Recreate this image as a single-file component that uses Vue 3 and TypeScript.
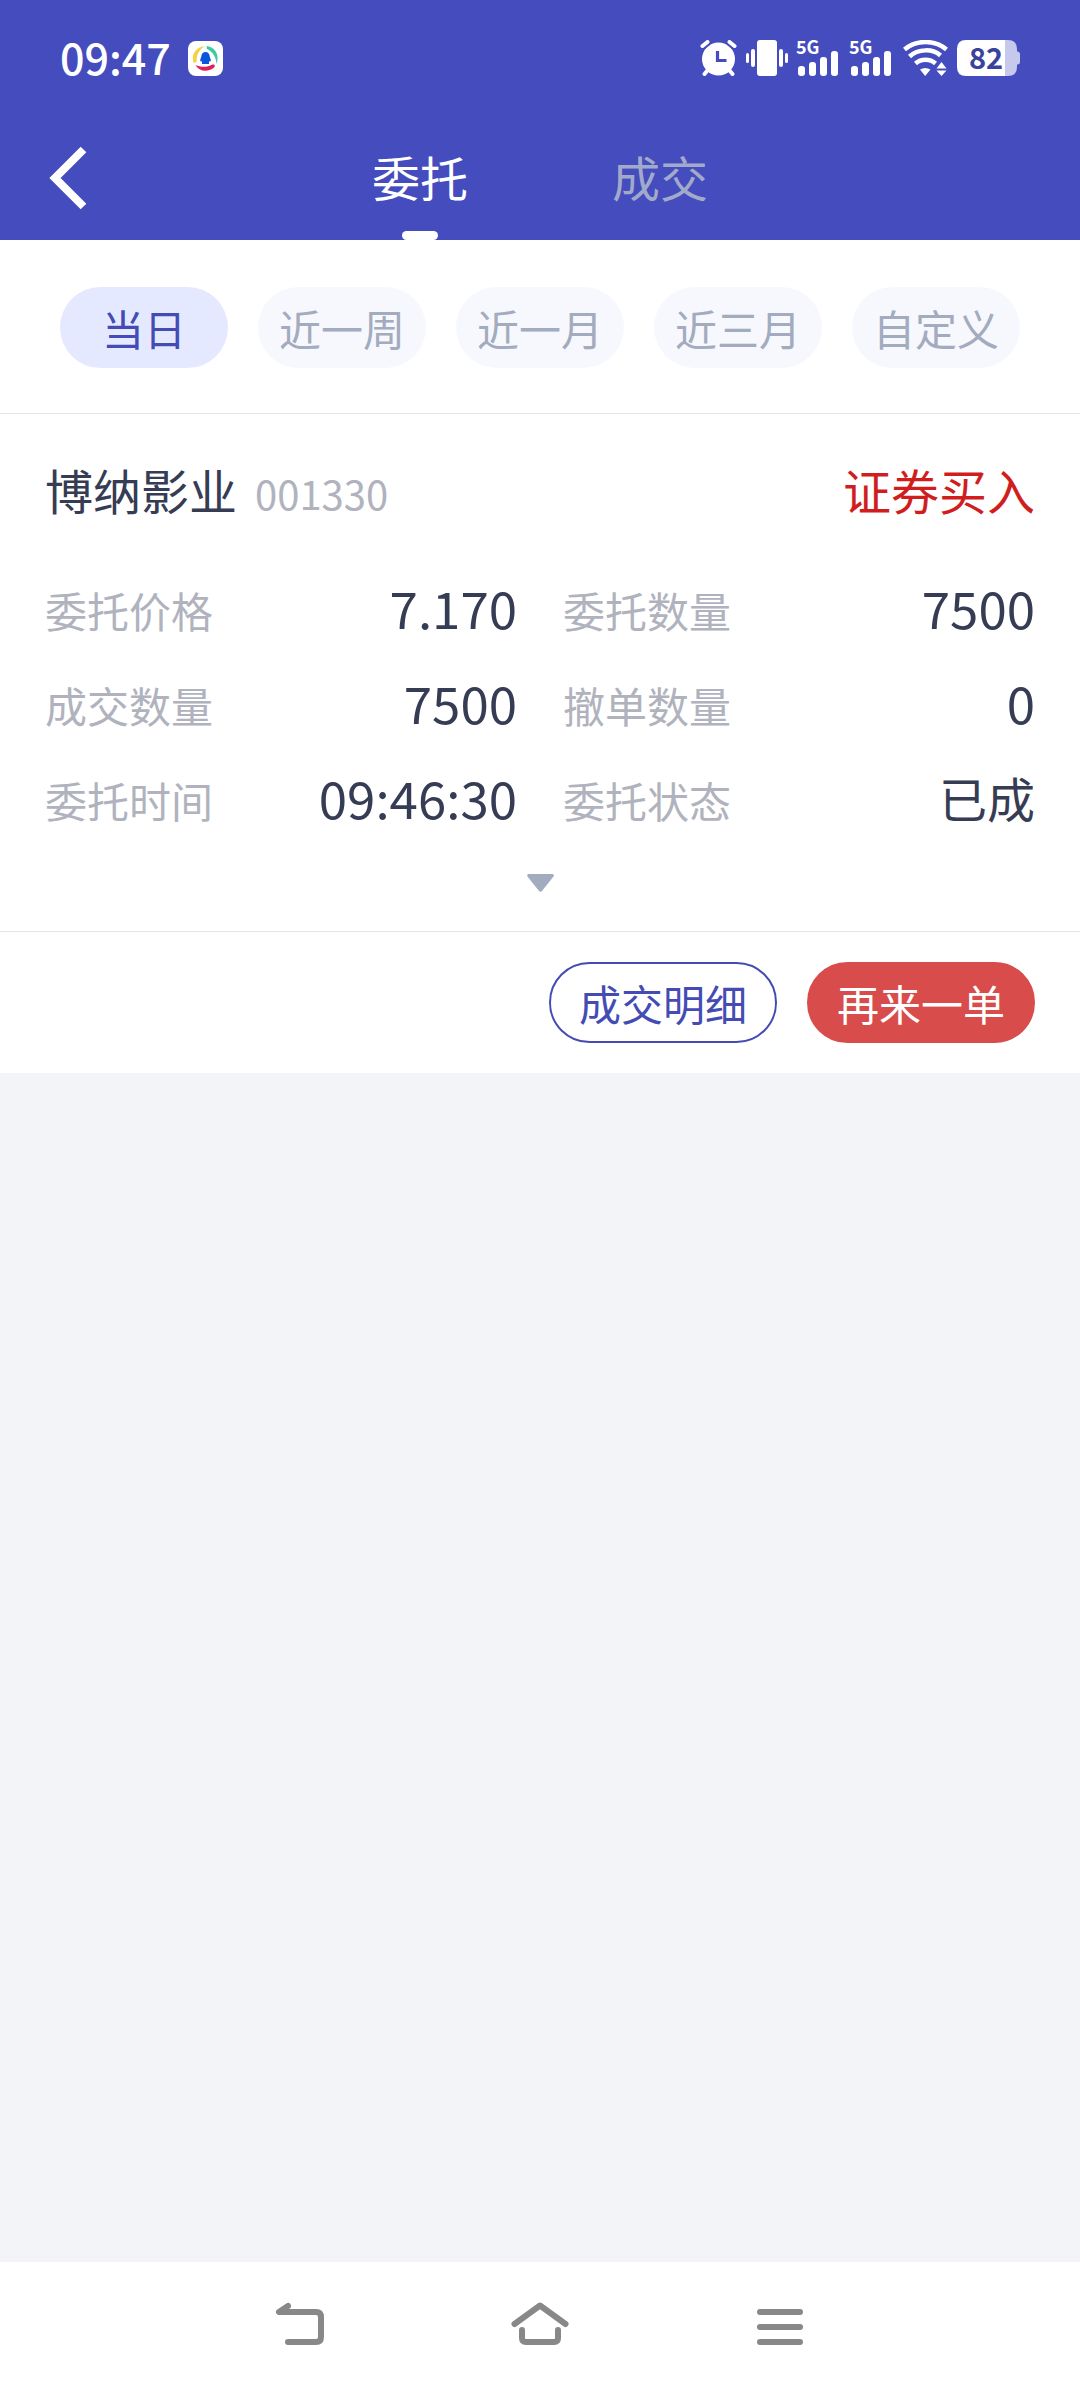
<script setup lang="ts">
import { ref } from 'vue'

interface Field {
  label: string
  value: string
  text?: boolean
}

const tabs: string[] = ['委托', '成交']
const activeTab = ref<string>('委托')

const ranges: string[] = ['当日', '近一周', '近一月', '近三月', '自定义']
const activeRange = ref<string>('当日')

const fields: Field[] = [
  { label: '委托价格', value: '7.170' },
  { label: '委托数量', value: '7500' },
  { label: '成交数量', value: '7500' },
  { label: '撤单数量', value: '0' },
  { label: '委托时间', value: '09:46:30' },
  { label: '委托状态', value: '已成', text: true },
]
</script>

<template>
  <div class="app">
    <header class="top">
      <div class="status">
        <div class="status-left">
          <span class="clock">09:47</span>
          <svg class="app-badge" width="35" height="35" viewBox="0 0 35 35" aria-hidden="true">
            <rect width="35" height="35" rx="8" fill="#fff" />
            <path d="M5.500 22C3 13 8 6 17 5C11 9 8.500 13 8.500 21Z" fill="#f5d040" />
            <path d="M19 5C27 6 32 14 28.500 23C28 16 25 11 18.500 7.500Z" fill="#3ccba6" />
            <path d="M7.500 24C13 26.500 19 26.500 24.500 23.500C27 23 27.500 25.500 25.500 27C19 31.500 11 30.500 7.500 24Z" fill="#dc1f5b" />
            <path d="M17.500 11C20 11 21.500 12.500 21.700 15.500L23 19.500L22 20.500L21 20.200V23H14V20.200L13 20.500L12 19.500L13.300 15.500C13.500 12.500 15 11 17.500 11Z" fill="#0b55dd" />
          </svg>
        </div>
        <div class="status-right">
          <svg width="37" height="36" viewBox="0 0 37 36" aria-hidden="true">
            <circle cx="18.500" cy="19" r="16.500" fill="#fff" />
            <path d="M2.500 6L7.500 2M34.500 6L29.500 2" stroke="#444cbe" stroke-width="8" />
            <path d="M2.500 6L7.500 2M34.500 6L29.500 2" stroke="#fff" stroke-width="4" stroke-linecap="round" />
            <path d="M7 31L4.500 34M30 31L32.500 34" stroke="#fff" stroke-width="4" stroke-linecap="round" />
            <path d="M17.500 11V20.500H26.500" fill="none" stroke="#444cbe" stroke-width="3.200" />
          </svg>
          <svg width="42" height="36" viewBox="0 0 42 36" aria-hidden="true">
            <g fill="#fff">
              <rect x="11" width="20" height="36" rx="3" />
              <rect y="13" width="3" height="10" rx="1.500" />
              <rect x="5" y="9" width="4" height="18" rx="2" />
              <rect x="33" y="9" width="4" height="18" rx="2" />
              <rect x="39" y="13" width="3" height="10" rx="1.500" />
            </g>
          </svg>
          <span v-for="n in 2" :key="n" class="signal">
            <span class="signal-tag">5G</span>
            <svg width="40" height="25" viewBox="0 0 40 25" aria-hidden="true">
              <g fill="#fff">
                <rect y="15" width="7" height="10" rx="3" />
                <rect x="11" y="11" width="7" height="14" rx="3" />
                <rect x="22" y="6" width="7" height="19" rx="3" />
                <rect x="33" width="7" height="25" rx="3" />
              </g>
            </svg>
          </span>
          <svg width="45" height="36" viewBox="0 0 45 36" aria-hidden="true">
            <g fill="none" stroke="#fff" stroke-width="4.500">
              <path d="M1.500 9.500C13 -0.500 32 -0.500 43.500 9.500" />
              <path d="M6.500 16.500C15 8.500 30 8.500 37.500 15.500" />
              <path d="M12.500 23.500C18 18.500 27 18.500 32.500 23.500" />
            </g>
            <path d="M17 29.500Q22 26.500 27.500 29.500L22.200 36Z" fill="#fff" />
            <path d="M33.500 28.500L38.500 22L43.500 28.500ZM33.500 30.500H43.500L38.500 36Z" fill="#fff" />
          </svg>
          <span class="battery">
            <svg width="63" height="36" viewBox="0 0 63 36" aria-hidden="true">
              <path d="M48 0H51Q60 0 60 9V11.500H61Q63 12 63 14V22Q63 24 61 24.500H60V27Q60 36 51 36H48Z" fill="#c7c9ec" />
              <path d="M9 0H48V36H9Q0 36 0 27V9Q0 0 9 0Z" fill="#fff" />
            </svg>
            <span class="battery-level">82</span>
          </span>
        </div>
      </div>

      <nav class="bar">
        <button class="back" type="button" aria-label="返回">
          <svg width="40" height="64" viewBox="0 0 40 64" aria-hidden="true">
            <path d="M35.500 3.500L7 32L35.500 60.500" fill="none" stroke="#fff" stroke-width="8" />
          </svg>
        </button>
        <div class="tabs">
          <button
            v-for="tab in tabs"
            :key="tab"
            type="button"
            class="tab"
            :class="{ active: tab === activeTab }"
            @click="activeTab = tab"
          >
            {{ tab }}
          </button>
        </div>
      </nav>
    </header>

    <section class="ranges">
      <button
        v-for="range in ranges"
        :key="range"
        type="button"
        class="range"
        :class="{ active: range === activeRange }"
        @click="activeRange = range"
      >
        {{ range }}
      </button>
    </section>

    <main class="content">
      <article class="order">
        <div class="order-body">
          <div class="order-head">
            <h2 class="name">博纳影业</h2>
            <span class="code">001330</span>
            <span class="side">证券买入</span>
          </div>
          <dl class="fields">
            <div v-for="field in fields" :key="field.label" class="field">
              <dt>{{ field.label }}</dt>
              <dd :class="{ text: field.text }">{{ field.value }}</dd>
            </div>
          </dl>
          <button class="expand" type="button" aria-label="展开">
            <svg width="27" height="18" viewBox="0 0 27 18" aria-hidden="true">
              <path d="M1.500 0H25.500Q27.500 0.500 26.500 2.500L15 17Q13.500 18.500 12 17L0.500 2.500Q-0.500 0.500 1.500 0Z" fill="#a3abbe" />
            </svg>
          </button>
        </div>
        <div class="actions">
          <button class="action outline" type="button">成交明细</button>
          <button class="action solid" type="button">再来一单</button>
        </div>
      </article>
    </main>

    <footer class="system-nav">
      <button type="button" aria-label="返回">
        <svg width="60" height="44" viewBox="0 0 60 44" aria-hidden="true">
          <path d="M18 4L9 10H46Q51 10 51 15V35Q51 40 46 40H18" />
        </svg>
      </button>
      <button type="button" aria-label="主页">
        <svg width="60" height="44" viewBox="0 0 60 44" aria-hidden="true">
          <path d="M4.500 22L30 3.500L55.500 22M12 28V36Q12 40 16 40H44Q48 40 48 36V28" />
        </svg>
      </button>
      <button type="button" aria-label="最近任务">
        <svg width="60" height="44" viewBox="0 0 60 44" aria-hidden="true">
          <path d="M10 10H50M10 25H50M10 40H50" />
        </svg>
      </button>
    </footer>
  </div>
</template>

<style>
body {
  margin: 0;
  background: #f3f4f7;
}
</style>

<style scoped>
.app {
  display: flex;
  flex-direction: column;
  min-height: 100vh;
  font-family: "Noto Sans CJK SC", "Noto Sans", sans-serif;
  color: #363c54;
  background: #f3f4f7;
}

button {
  padding: 0;
  border: 0;
  background: none;
  font: inherit;
  color: inherit;
  cursor: pointer;
}

svg {
  display: block;
}

.top {
  background: #444cbe;
  color: #fff;
}

.status {
  display: flex;
  align-items: center;
  justify-content: space-between;
  height: 116px;
  padding: 0 60px;
}

.status-left {
  display: flex;
  align-items: center;
  gap: 17px;
}

.clock {
  padding-bottom: 4px;
  font-size: 43px;
  line-height: 48px;
  font-weight: 500;
}

.status-right {
  display: flex;
  align-items: center;
  gap: 9px;
}

.signal {
  position: relative;
  display: flex;
  align-items: flex-end;
  width: 44px;
  height: 36px;
  padding-left: 1px;
  box-sizing: border-box;
}

.signal-tag {
  position: absolute;
  left: -1px;
  top: -3px;
  font-size: 18px;
  line-height: 18px;
  font-weight: 700;
}

.battery {
  position: relative;
}

.battery-level {
  position: absolute;
  left: 12px;
  top: 0;
  font-size: 29px;
  line-height: 33px;
  font-weight: 700;
  color: #3a429c;
}

.bar {
  display: grid;
  grid-template-columns: 1fr 480px 1fr;
  height: 124px;
}

.back {
  display: flex;
  align-items: center;
  padding-left: 48px;
}

.tabs {
  display: grid;
  grid-template-columns: 1fr 1fr;
}

.tab {
  position: relative;
  padding-bottom: 4px;
  font-size: 48px;
  line-height: 58px;
  color: #a2aacb;
}

.tab.active {
  color: #fff;
}

.tab.active::after {
  content: "";
  position: absolute;
  left: 50%;
  bottom: 0;
  width: 36px;
  height: 9px;
  margin-left: -18px;
  border-radius: 5px;
  background: #fff;
}

.ranges {
  display: flex;
  justify-content: space-between;
  padding: 47px 60px 45px;
  border-bottom: 1px solid #e4e5e7;
  background: #fff;
}

.range {
  width: 168px;
  height: 81px;
  border-radius: 41px;
  background: #f6f8fd;
  font-size: 42px;
  line-height: 81px;
  color: #a3abbe;
}

.range.active {
  background: #e5e9ff;
  color: #444cb4;
}

.content {
  flex: 1;
}

.order {
  background: #fff;
}

.order-body {
  padding: 46px 45px 0;
  border-bottom: 1px solid #e4e5e7;
}

.order-head {
  display: flex;
  align-items: baseline;
  height: 60px;
  line-height: 58px;
}

.name {
  margin: 0;
  font-size: 48px;
  font-weight: 400;
}

.code {
  margin-left: 18px;
  font-size: 40px;
  color: #b0b3be;
}

.side {
  margin-left: auto;
  font-size: 48px;
  color: #d01e1e;
}

.fields {
  display: grid;
  grid-template-columns: 1fr 1fr;
  column-gap: 46px;
  margin: 42px 0 0;
}

.field {
  display: flex;
  align-items: center;
  justify-content: space-between;
  height: 95px;
}

.field dt {
  font-size: 42px;
  color: #b0b3be;
}

.field dd {
  margin: 0;
  padding-bottom: 6px;
  font-size: 51px;
}

.field dd.text {
  font-size: 48px;
}

.expand {
  display: flex;
  justify-content: center;
  width: 100%;
  padding: 27px 0 39px;
}

.actions {
  display: flex;
  justify-content: flex-end;
  gap: 30px;
  padding: 30px 45px;
}

.action {
  box-sizing: border-box;
  height: 81px;
  padding: 0 28px;
  border: 2px solid #444cb4;
  border-radius: 41px;
  font-size: 42px;
  line-height: 77px;
}

.action.outline {
  color: #444cb4;
}

.action.solid {
  border-color: #d84c4b;
  background: #d84c4b;
  color: #fff;
}

.system-nav {
  display: flex;
  justify-content: center;
  height: 126px;
  background: #fff;
}

.system-nav button {
  display: flex;
  align-items: center;
  justify-content: center;
  width: 240px;
  padding-bottom: 2px;
}

.system-nav svg {
  fill: none;
  stroke: #888;
  stroke-width: 6;
  stroke-linecap: round;
  stroke-linejoin: round;
}
</style>
